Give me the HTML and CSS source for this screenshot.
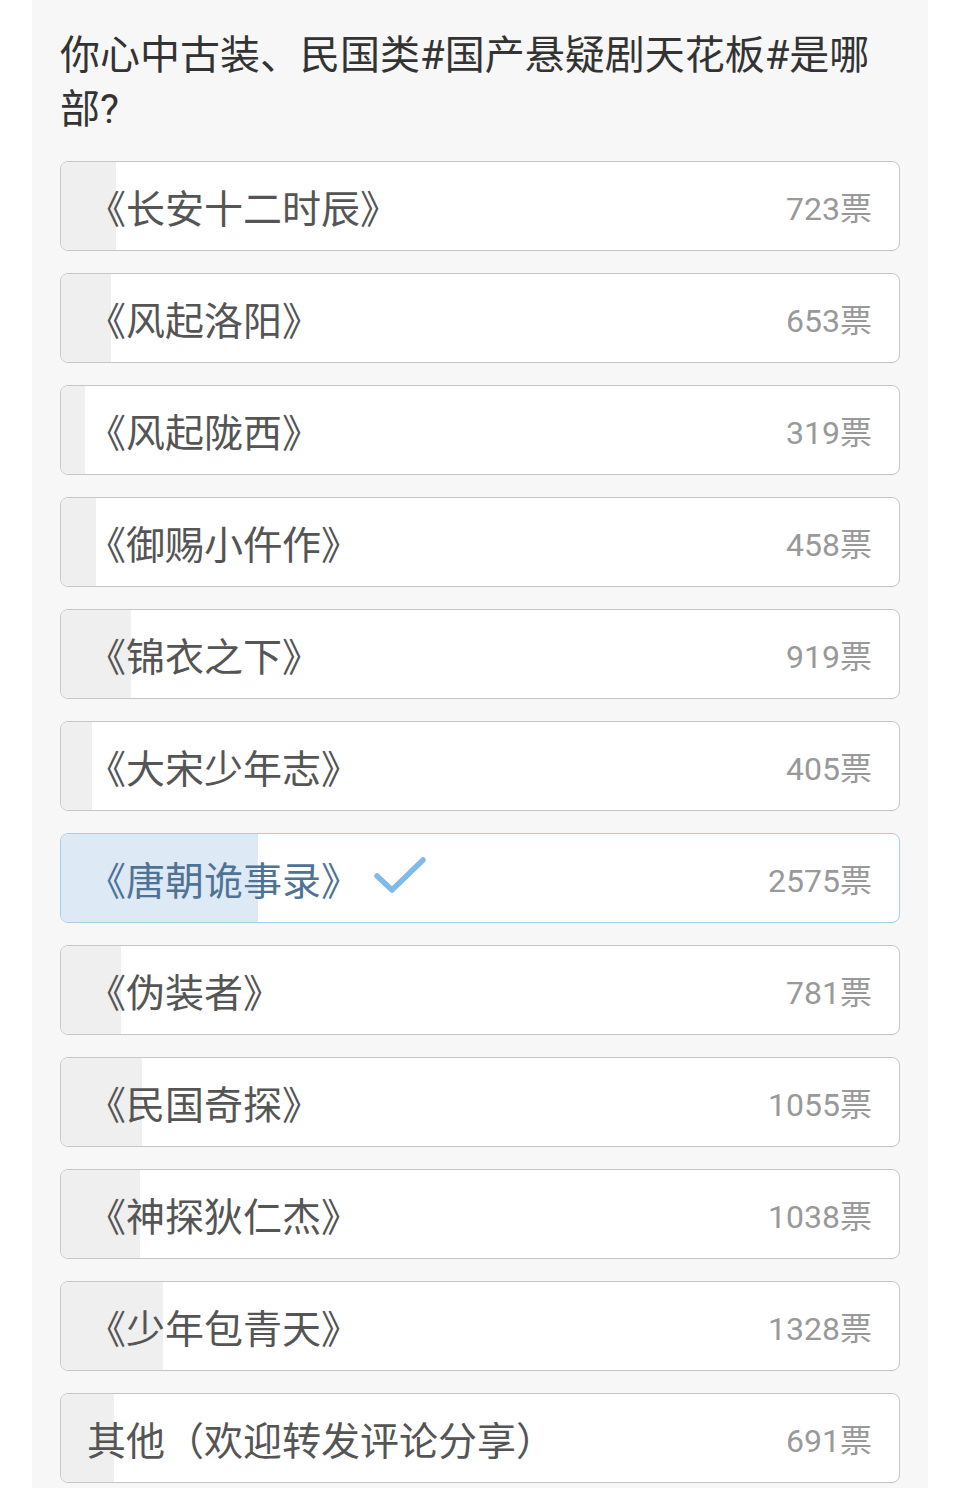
FILE: index.html
```html
<!DOCTYPE html>
<html lang="zh-CN">
<head>
    <meta charset="UTF-8">
    <meta name="viewport" content="width=device-width, initial-scale=1.0">
    <title>投票</title>
    <link rel="stylesheet" href="styles.css">
</head>
<body>

    <div class="card">
        <h1 class="title">你心中古装、民国类#国产悬疑剧天花板#是哪部?</h1>

        <div class="options">
            <div class="option">
                <div class="fill" style="width: 6.6%"></div>
                <span class="name">《长安十二时辰》</span>
                <span class="votes">723票</span>
            </div>
            <div class="option">
                <div class="fill" style="width: 5.97%"></div>
                <span class="name">《风起洛阳》</span>
                <span class="votes">653票</span>
            </div>
            <div class="option">
                <div class="fill" style="width: 2.91%"></div>
                <span class="name">《风起陇西》</span>
                <span class="votes">319票</span>
            </div>
            <div class="option">
                <div class="fill" style="width: 4.18%"></div>
                <span class="name">《御赐小仵作》</span>
                <span class="votes">458票</span>
            </div>
            <div class="option">
                <div class="fill" style="width: 8.4%"></div>
                <span class="name">《锦衣之下》</span>
                <span class="votes">919票</span>
            </div>
            <div class="option">
                <div class="fill" style="width: 3.7%"></div>
                <span class="name">《大宋少年志》</span>
                <span class="votes">405票</span>
            </div>
            <div class="option selected">
                <div class="fill" style="width: 23.53%"></div>
                <span class="name">《唐朝诡事录》</span>
                <svg class="check" width="52" height="40" viewBox="0 0 52 40">
                    <path d="M3 20 L18 34 L49 4" fill="none" stroke="#80bbe8" stroke-width="5.5" stroke-linecap="round" stroke-linejoin="round"/>
                </svg>
                <span class="votes">2575票</span>
            </div>
            <div class="option">
                <div class="fill" style="width: 7.14%"></div>
                <span class="name">《伪装者》</span>
                <span class="votes">781票</span>
            </div>
            <div class="option">
                <div class="fill" style="width: 9.64%"></div>
                <span class="name">《民国奇探》</span>
                <span class="votes">1055票</span>
            </div>
            <div class="option">
                <div class="fill" style="width: 9.48%"></div>
                <span class="name">《神探狄仁杰》</span>
                <span class="votes">1038票</span>
            </div>
            <div class="option">
                <div class="fill" style="width: 12.13%"></div>
                <span class="name">《少年包青天》</span>
                <span class="votes">1328票</span>
            </div>
            <div class="option">
                <div class="fill" style="width: 6.31%"></div>
                <span class="name">其他（欢迎转发评论分享）</span>
                <span class="votes">691票</span>
            </div>
        </div>
    </div>

</body>
</html>
```

FILE: styles.css
```css
body {
    margin: 0;
    background-color: #fff;
    font-family: Roboto, "Noto Sans CJK SC", sans-serif;
}

.card {
    margin: 0 32px;
    padding: 29px 28px 6px;
    background-color: #f7f7f7;
    min-height: 1488px;
    box-sizing: border-box;
}

.title {
    margin: 0 0 24px;
    font-size: 40px;
    line-height: 54px;
    font-weight: normal;
    color: #333;
}

.options {
    display: flex;
    flex-direction: column;
    gap: 22px;
}

.option {
    position: relative;
    display: flex;
    align-items: center;
    height: 90px;
    box-sizing: border-box;
    padding: 0 27px 0 26px;
    background-color: #fff;
    border: 1.5px solid #c6c6c6;
    border-radius: 8px;
    overflow: hidden;
}

.fill {
    position: absolute;
    left: 0;
    top: 0;
    bottom: 0;
    background-color: #efefef;
}

.name {
    position: relative;
    font-size: 39px;
    color: #555;
    text-spacing-trim: space-all;
}

.votes {
    position: relative;
    margin-left: auto;
    font-size: 32px;
    color: #999;
}

.check {
    position: relative;
    margin-left: 14px;
    margin-top: -4px;
}

.selected {
    border-color: #a9cde6;
}

.selected .fill {
    background-color: #dde9f5;
}

.selected .name {
    color: #4f7396;
}
```
